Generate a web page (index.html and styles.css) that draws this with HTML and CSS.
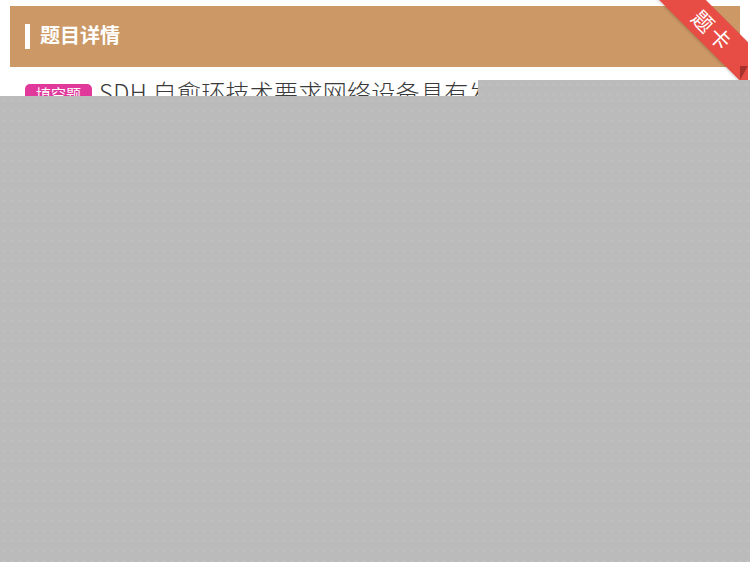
FILE: index.html
```html
<!DOCTYPE html>
<html lang="zh">
<head>
<meta charset="utf-8">
<link rel="stylesheet" href="styles.css">
</head>
<body>
<div class="wrap">
  <div class="card">
    <div class="card-head">
      <span class="bar"></span>
      <h1 class="title">题目详情</h1>
    </div>
    <div class="card-body">
      <div class="question">
        <span class="tag">填空题</span>
        <p class="q-text">SDH 自愈环技术要求网络设备具有发现替代路由，并在一定时限内重新建立通信的能力。</p>
      </div>
    </div>
  </div>
</div>
<div class="ribbon-clip">
  <div class="ribbon">题卡</div>
</div>
<div class="fold"></div>
<div class="mask mask-top"></div>
<div class="mask mask-main"></div>
</body>
</html>
```
FILE: styles.css
```css
html, body {
  margin: 0;
  padding: 0;
  background: #ffffff;
  font-family: "Noto Sans CJK SC", "Noto Sans", sans-serif;
}
.wrap {
  padding: 6px 10px 0 10px;
}
.card {
  background: #ffffff;
}
.card-head {
  height: 61px;
  background: #cc9966;
  display: flex;
  align-items: center;
  padding-left: 15px;
}
.bar {
  width: 5px;
  height: 25px;
  background: #ffffff;
  margin-right: 10px;
}
.title {
  margin: -3px 0 0 0;
  color: #ffffff;
  font-size: 20px;
  font-weight: bold;
  line-height: 28px;
}
.card-body {
  padding: 9px 15px 20px 15px;
}
.question {
  display: flex;
  align-items: flex-start;
}
.tag {
  flex: none;
  margin-top: 8px;
  background: #e0399b;
  color: #ffffff;
  font-size: 15px;
  line-height: 20px;
  height: 22px;
  padding: 0 11px;
  border-radius: 5px;
  margin-right: 7px;
}
.q-text {
  margin: 0;
  color: #3a3a3a;
  font-size: 24px;
  line-height: 32px;
  font-weight: 300;
  letter-spacing: 0.3px;
}
.ribbon-clip {
  position: absolute;
  left: 640px;
  top: 0;
  width: 108px;
  height: 100px;
  overflow: hidden;
}
.ribbon {
  position: absolute;
  left: -2px;
  top: 14px;
  width: 150px;
  height: 33px;
  background: #e84d45;
  color: #ffffff;
  font-size: 21px;
  line-height: 33px;
  text-align: center;
  letter-spacing: 3px;
  transform: rotate(45deg);
  box-shadow: 0 1px 3px rgba(0,0,0,0.2);
}
.fold {
  position: absolute;
  left: 740px;
  top: 66px;
  width: 0;
  height: 0;
  border-left: 8px solid #a8322c;
  border-bottom: 14px solid transparent;
}
.mask {
  position: absolute;
  background-color: #bbbbbb;
  background-image: radial-gradient(circle, #c2c2c2 0.6px, transparent 1px);
  background-size: 8px 10px;
  background-position: 0 0;
}
.mask-top {
  left: 478px;
  top: 80px;
  width: 272px;
  height: 16px;
}
.mask-main {
  left: 0;
  top: 96px;
  width: 750px;
  height: 466px;
}
```
